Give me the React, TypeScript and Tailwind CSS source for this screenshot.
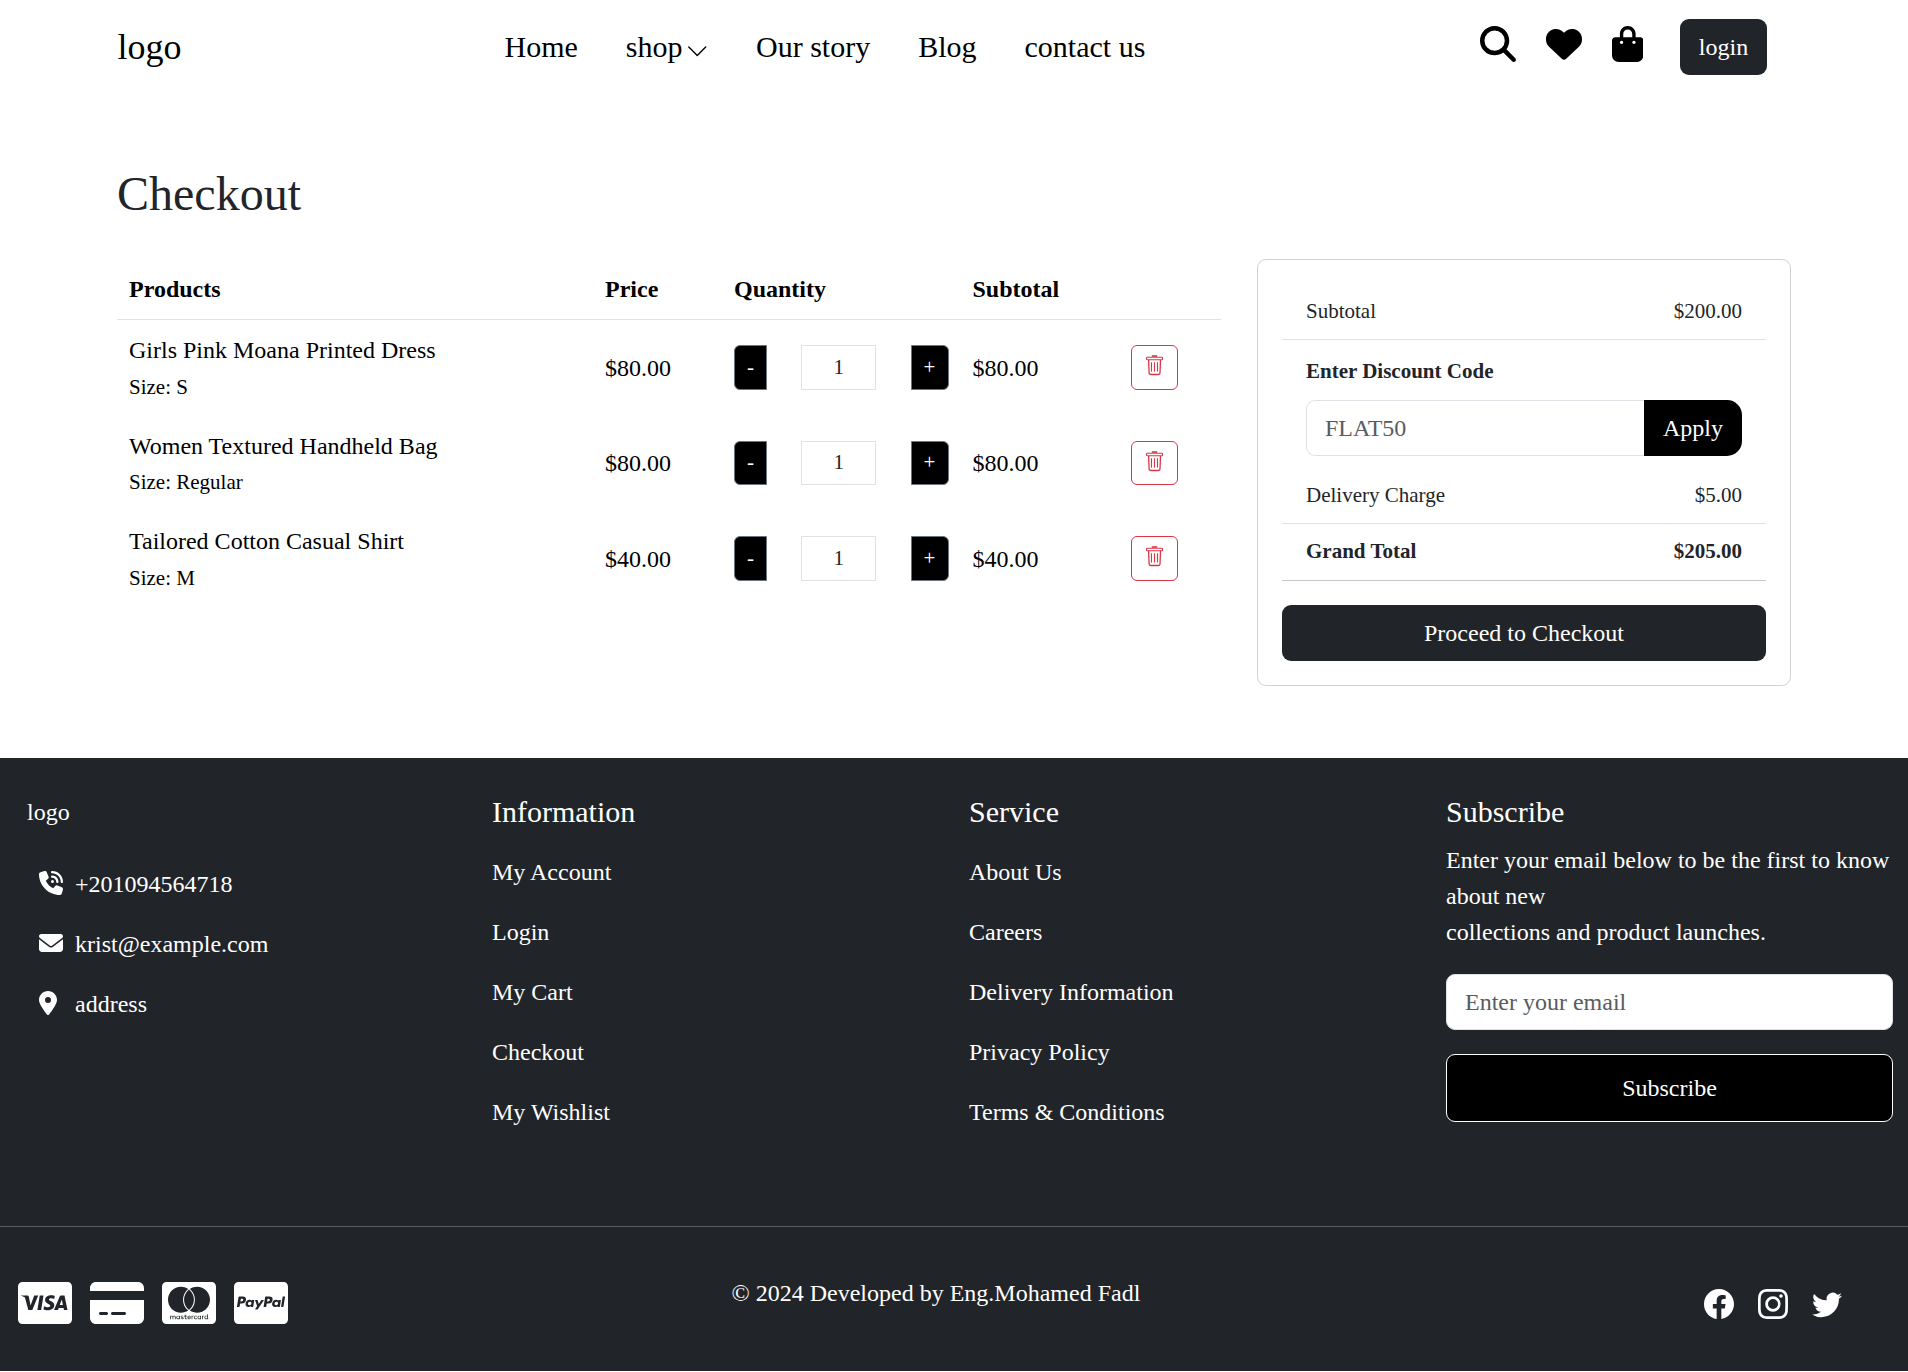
import React from "react";
import {
  FaBagShopping,
  FaCcMastercard,
  FaCcPaypal,
  FaCcVisa,
  FaCreditCard,
  FaEnvelope,
  FaHeart,
  FaLocationDot,
  FaMagnifyingGlass,
  FaPhoneVolume,
} from "react-icons/fa6";
import { BsChevronDown, BsFacebook, BsInstagram, BsTwitter } from "react-icons/bs";

type Product = { name: string; size: string; price: string; quantity: number; subtotal: string };

const products: Product[] = [
  { name: "Girls Pink Moana Printed Dress", size: "S", price: "$80.00", quantity: 1, subtotal: "$80.00" },
  { name: "Women Textured Handheld Bag", size: "Regular", price: "$80.00", quantity: 1, subtotal: "$80.00" },
  { name: "Tailored Cotton Casual Shirt", size: "M", price: "$40.00", quantity: 1, subtotal: "$40.00" },
];

const informationLinks = ["My Account", "Login", "My Cart", "Checkout", "My Wishlist"];
const serviceLinks = ["About Us", "Careers", "Delivery Information", "Privacy Policy", "Terms & Conditions"];

function TrashIcon() {
  return (
    <svg viewBox="0 0 21 21" className="size-[21px]" fill="none" stroke="currentColor">
      <path d="M7.8 1h5.4" strokeWidth="1.6" />
      <rect x="2.6" y="2.3" width="15.9" height="2.5" rx="0.6" strokeWidth="1.1" />
      <path d="M4.6 4.9l.5 13.2c0 .9.6 1.4 1.5 1.4h7.9c.9 0 1.5-.5 1.5-1.4l.5-13.2" strokeWidth="1.3" />
      <path d="M7.5 7.2v9.4M10.5 7.2v9.4M13.5 7.2v9.4" strokeWidth="1.1" />
    </svg>
  );
}

function Navbar() {
  return (
    <nav className="flex h-[94px] items-center pl-[117.5px] pr-[141px] text-black">
      <a href="#" className="w-[387px] text-[36px] leading-[54px]">logo</a>
      <ul className="mb-px flex gap-12 text-[30px] leading-[45px]">
        <li>Home</li>
        <li className="flex gap-[3px]">
          shop
          <BsChevronDown className="mt-[15.5px] size-[22.5px]" />
        </li>
        <li>Our story</li>
        <li>Blog</li>
        <li>contact us</li>
      </ul>
      <div className="ml-auto flex items-center">
        <div className="mb-[6px] flex gap-[30px]">
          <FaMagnifyingGlass className="size-9" />
          <FaHeart className="size-9" />
          <FaBagShopping className="h-9 w-[31.5px]" />
        </div>
        <button className="ml-[37px] h-14 w-[87px] rounded-[9px] bg-[#212529] text-white">login</button>
      </div>
    </nav>
  );
}

function ProductRow({ product }: { product: Product }) {
  return (
    <div className="grid h-[95.5px] grid-cols-[476px_129px_238.5px_158.5px_102px] text-black">
      <div className="px-3 pt-3">
        <div>{product.name}</div>
        <div className="mt-[2.9px] text-[21px] leading-[32px]">Size: {product.size}</div>
      </div>
      <div className="px-3 pt-[29.9px]">{product.price}</div>
      <div className="flex justify-between px-3 pt-[25px] text-[21px] leading-[32px]">
        <button className="flex h-[44.5px] w-[33px] justify-center rounded-l-[6px] border border-[#6c757d] bg-black pt-[4.9px] text-white">
          -
        </button>
        <span className="flex h-[44.5px] w-[75px] justify-center border border-[#dee2e6] pt-[4.9px] text-[#212529]">
          {product.quantity}
        </span>
        <button className="flex h-[44.5px] w-[38px] justify-center rounded-r-[6px] border border-[#6c757d] bg-black pt-[4.9px] text-white">
          +
        </button>
      </div>
      <div className="px-3 pt-[29.9px]">{product.subtotal}</div>
      <div className="px-3 pt-[25px]">
        <button className="flex h-[44.5px] w-[47px] justify-center rounded-[6px] border border-[#dc3545] pt-[9px] text-[#dc3545]">
          <TrashIcon />
        </button>
      </div>
    </div>
  );
}

function ProductTable() {
  return (
    <section className="w-[1104px]">
      <div className="grid grid-cols-[476px_129px_238.5px_158.5px_102px] border-b border-[#dee2e6] py-3 font-bold text-black">
        <span className="px-3">Products</span>
        <span className="px-3">Price</span>
        <span className="px-3">Quantity</span>
        <span className="px-3">Subtotal</span>
      </div>
      {products.map((p) => (
        <ProductRow key={p.name} product={p} />
      ))}
    </section>
  );
}

function Summary() {
  return (
    <aside className="h-[427px] w-[534px] rounded-[9px] border border-[#d2d2d2] px-6 pt-6">
      <div className="text-[21px] leading-[32px]">
        <div className="flex h-14 justify-between border-b border-[#dee2e6] px-6 pt-[11px]">
          <span>Subtotal</span>
          <span>$200.00</span>
        </div>
        <div className="h-[139px] px-6 pt-[15px]">
          <div className="font-bold">Enter Discount Code</div>
          <div className="mt-[13px] flex h-14 text-[24px] leading-[36px]">
            <input
              placeholder="FLAT50"
              className="h-14 w-[338px] rounded-l-[9px] border border-r-0 border-[#dee2e6] px-[18px] placeholder:text-[#595c5f] placeholder:opacity-100"
            />
            <button className="h-14 w-[98px] rounded-r-[15px] bg-black text-white">Apply</button>
          </div>
        </div>
        <div className="flex h-[45px] justify-between border-b border-[#dee2e6] px-6">
          <span>Delivery Charge</span>
          <span>$5.00</span>
        </div>
        <div className="flex h-[57px] justify-between border-b border-[#c8c9ca] px-6 pt-[11px] font-bold">
          <span>Grand Total</span>
          <span>$205.00</span>
        </div>
      </div>
      <button className="mt-6 h-14 w-full rounded-[9px] bg-[#212529] text-white">Proceed to Checkout</button>
    </aside>
  );
}

function LinkColumn({ title, links }: { title: string; links: string[] }) {
  return (
    <div className="px-[15px] pt-[35px]">
      <h5 className="text-[30px] leading-[37px]">{title}</h5>
      <ul className="mt-6 flex flex-col gap-6">
        {links.map((l) => (
          <li key={l}>{l}</li>
        ))}
      </ul>
    </div>
  );
}

function Footer() {
  return (
    <footer className="mt-[72px] h-[613px] bg-[#212529] text-white">
      <div className="grid h-[469px] grid-cols-4 border-b border-[#5c5f61]">
        <div className="px-[27px] pt-9">
          <div>logo</div>
          <ul className="mt-9 flex flex-col gap-6 pl-3">
            <li className="flex">
              <span className="w-9 pt-[5px]"><FaPhoneVolume className="size-6" /></span>
              +201094564718
            </li>
            <li className="flex">
              <span className="w-9 pt-[5px]"><FaEnvelope className="size-6" /></span>
              krist@example.com
            </li>
            <li className="flex">
              <span className="w-9 pt-[5px]"><FaLocationDot className="h-6 w-[18px]" /></span>
              address
            </li>
          </ul>
        </div>
        <LinkColumn title="Information" links={informationLinks} />
        <LinkColumn title="Service" links={serviceLinks} />
        <div className="px-[15px] pt-[35px]">
          <h5 className="text-[30px] leading-[37px]">Subscribe</h5>
          <p className="mt-3">
            Enter your email below to be the first to know about new
            <br />
            collections and product launches.
          </p>
          <input
            placeholder="Enter your email"
            className="mt-6 block h-14 w-full rounded-[9px] border border-[#dee2e6] bg-white px-[18px] placeholder:text-[#595c5f] placeholder:opacity-100"
          />
          <button className="mt-6 block h-[68px] w-full rounded-[9px] border border-white bg-black">Subscribe</button>
        </div>
      </div>
      <div className="flex pl-[18px] pr-[66px]">
        <div className="flex w-[713.5px] gap-[18px] pt-[52px]">
          <FaCcVisa className="h-12 w-[54px]" />
          <FaCreditCard className="h-12 w-[54px]" />
          <FaCcMastercard className="h-12 w-[54px]" />
          <FaCcPaypal className="h-12 w-[54px]" />
        </div>
        <p className="pt-12">© 2024 Developed by Eng.Mohamed Fadl</p>
        <div className="ml-auto flex gap-6 pt-[62px]">
          <BsFacebook className="size-[30px]" />
          <BsInstagram className="size-[30px]" />
          <BsTwitter className="size-[30px]" />
        </div>
      </div>
    </footer>
  );
}

export default function App() {
  return (
    <div className="h-[1372px] w-[1908px] overflow-hidden bg-white font-['Liberation_Serif',serif] text-[24px] leading-[36px] text-[#212529]">
      <Navbar />
      <main className="px-[117px] pt-[71px]">
        <h1 className="text-[48px] leading-[57px]">Checkout</h1>
        <div className="mt-[37px] flex gap-9">
          <ProductTable />
          <Summary />
        </div>
      </main>
      <Footer />
    </div>
  );
}
